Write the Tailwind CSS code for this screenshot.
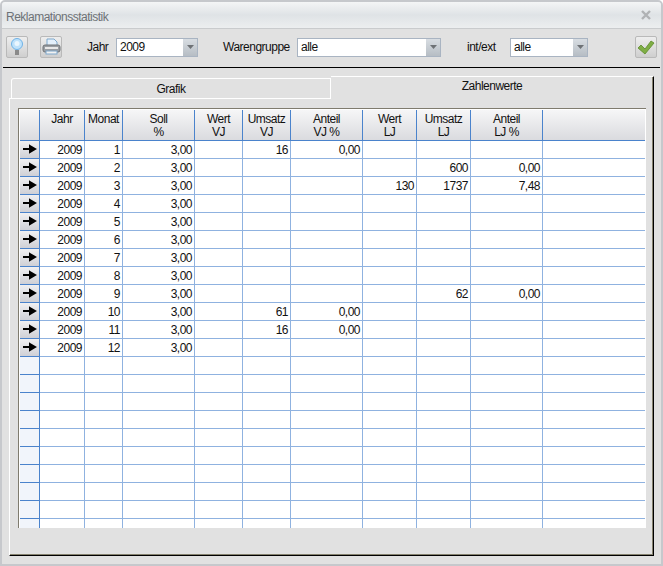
<!DOCTYPE html>
<html lang="de">
  <head>
    <meta charset="UTF-8" />
    <title>Reklamationsstatistik</title>
    <script src="https://cdn.jsdelivr.net/npm/@tailwindcss/browser@4"></script>
  </head>
  <body class="w-[663px] h-[566px] overflow-hidden bg-white font-['Liberation_Sans',sans-serif] text-[12px] tracking-[-0.5px] text-[#111]">
    <div class="w-[663px] h-[566px] flex flex-col bg-[#e1e1e1] border-2 border-[#c6c8cc] rounded-t-[5px] overflow-hidden">
      <!-- title bar -->
      <div class="h-[27px] shrink-0 flex items-center justify-between pl-[4px] pr-[10px] bg-gradient-to-b from-[#f4f5f6] via-[#dfe3e6] to-[#eceeef] border-b border-[#c9cbcd] text-[#6d7276]">
        <span class="pt-[4px]">Reklamationsstatistik</span>
        <svg class="w-[10px] h-[10px]" viewBox="0 0 10 10"><path d="M1 1l8 8M9 1l-8 8" stroke="#b0b2b4" stroke-width="2.4" fill="none" /></svg>
      </div>

      <!-- toolbar -->
      <div class="h-[39px] shrink-0 flex items-center pl-[3px] pb-[2px] border-b border-black mx-px whitespace-nowrap">
        <button class="w-[22px] h-[22px] flex items-center justify-center bg-gradient-to-b from-[#eeeeee] to-[#cfcfcf] border border-[#b9b9b9] rounded-[2px]">
          <svg class="w-[14px] h-[18px]" viewBox="0 0 14 18">
            <circle cx="7" cy="6" r="5.5" fill="#bfe2fb" stroke="#6fb2e6" />
            <circle cx="7" cy="5.5" r="2.5" fill="#eaf6fe" />
            <path d="M5 12h4v5H5z" fill="#8a8a8a" />
          </svg>
        </button>
        <button class="w-[22px] h-[22px] ml-[12px] flex items-center justify-center bg-gradient-to-b from-[#eeeeee] to-[#cfcfcf] border border-[#b9b9b9] rounded-[2px]">
          <svg class="w-[19px] h-[18px]" viewBox="0 0 19 18">
            <path d="M5 1h7l3 3v5H5z" fill="#e4f0fb" stroke="#7fa8cc" />
            <rect x="1" y="7" width="17" height="7" rx="2" fill="#9a9ea3" stroke="#6f7377" />
            <rect x="3" y="9" width="13" height="2" fill="#e8e8e8" />
            <rect x="4" y="13" width="11" height="3" fill="#f2f2f2" stroke="#7fa8cc" />
          </svg>
        </button>
        <span class="ml-[25px] w-[20px]">Jahr</span>
        <div class="ml-[9px] w-[82px] h-[19px] flex bg-white border border-[#a9b4c2]">
          <span class="flex-1 pl-[3px] leading-[17px]">2009</span>
          <span class="w-[14px] flex items-center justify-center bg-gradient-to-b from-[#d8dde2] to-[#b6bdc4]">
            <svg class="w-[7px] h-[4px]" viewBox="0 0 7 4"><path d="M0 0h7L3.5 4z" fill="#6e7276" /></svg>
          </span>
        </div>
        <span class="ml-[25px] w-[65px]">Warengruppe</span>
        <div class="ml-[9px] w-[144px] h-[19px] flex bg-white border border-[#a9b4c2]">
          <span class="flex-1 pl-[3px] leading-[17px]">alle</span>
          <span class="w-[14px] flex items-center justify-center bg-gradient-to-b from-[#d8dde2] to-[#b6bdc4]">
            <svg class="w-[7px] h-[4px]" viewBox="0 0 7 4"><path d="M0 0h7L3.5 4z" fill="#6e7276" /></svg>
          </span>
        </div>
        <span class="ml-[26px] w-[30px]">int/ext</span>
        <div class="ml-[13px] w-[78px] h-[19px] flex bg-white border border-[#a9b4c2]">
          <span class="flex-1 pl-[3px] leading-[17px]">alle</span>
          <span class="w-[14px] flex items-center justify-center bg-gradient-to-b from-[#d8dde2] to-[#b6bdc4]">
            <svg class="w-[7px] h-[4px]" viewBox="0 0 7 4"><path d="M0 0h7L3.5 4z" fill="#6e7276" /></svg>
          </span>
        </div>
        <button class="ml-[47px] w-[22px] h-[22px] flex items-center justify-center bg-gradient-to-b from-[#eeeeee] to-[#cfcfcf] border border-[#b9b9b9] rounded-[2px]">
          <svg class="w-[18px] h-[15px]" viewBox="0 0 18 15"><path d="M1 8l3-3 4 4 6-8 3 2-9 11z" fill="#7fae45" stroke="#5d8a2c" stroke-width=".8" /></svg>
        </button>
      </div>

      <!-- tabs -->
      <div class="h-[31px] w-[645px] ml-[7px] shrink-0 flex items-end">
        <div class="w-[322px] h-[21px] pl-[2px] border-b border-white">
          <div class="h-full flex items-center justify-center border-t border-l border-r border-white rounded-tl-[3px]">Grafik</div>
        </div>
        <div class="flex-1 h-[23px] pb-[4px] flex items-center justify-center border-t border-t-white border-r border-r-black shadow-[inset_-1px_0_0_#85826f]">Zahlenwerte</div>
      </div>

      <!-- tab page with the grid -->
      <div class="w-[645px] h-[457px] ml-[7px] pt-[9px] pl-[8px] border-l border-l-white border-r border-r-black border-b border-b-black shadow-[inset_-1px_-1px_0_#85826f]">
        <div class="w-[628px] h-[420px] overflow-hidden bg-white pl-px pt-px pr-px pb-px border-t border-l border-[#7f7b6e]">
          <table class="table-fixed border-separate border-spacing-0 w-[625px] text-right">
            <colgroup>
              <col class="w-[20px]" /><col class="w-[45px]" /><col class="w-[38px]" /><col class="w-[72px]" /><col class="w-[48px]" /><col class="w-[48px]" /><col class="w-[72px]" /><col class="w-[54px]" /><col class="w-[54px]" /><col class="w-[72px]" /><col />
            </colgroup>
            <thead>
              <tr class="h-[31px] bg-gradient-to-b from-[#f6f6f7] to-[#d9dade] text-center align-top leading-[13px] [&>th]:font-normal [&>th]:pt-[3px] [&>th]:border-r [&>th]:border-r-[#4a83cc] [&>th]:border-b [&>th]:border-b-[#4a83cc]">
                <th></th><th>Jahr</th><th>Monat</th><th>Soll<br />%</th><th>Wert<br />VJ</th><th>Umsatz<br />VJ</th><th>Anteil<br />VJ %</th><th>Wert<br />LJ</th><th>Umsatz<br />LJ</th><th>Anteil<br />LJ %</th><th class="!border-r-0"></th>
              </tr>
            </thead>
            <tbody class="[&_td]:border-r [&_td]:border-b [&_td]:border-[#8fb2e0] [&_td]:p-0 [&_td]:pr-[2px] [&_td]:pt-px [&_td]:h-[18px] [&_td]:leading-[16px] [&_td:first-child]:border-[#4a83cc] [&_td:first-child]:pr-0 [&_td:first-child]:pt-0 [&_td:last-child]:border-r-0">
              <tr><td class="bg-gradient-to-b from-[#f0f0f2] to-[#cfd0d6]"><svg class="w-[19px] h-[17px]" viewBox="0 0 19 17"><path d="M3 8h9M10 5l5 3-5 3z" stroke="#000" stroke-width="2" fill="#000" /></svg></td><td>2009</td><td>1</td><td>3,00</td><td></td><td>16</td><td>0,00</td><td></td><td></td><td></td><td></td></tr>
              <tr><td class="bg-gradient-to-b from-[#f0f0f2] to-[#cfd0d6]"><svg class="w-[19px] h-[17px]" viewBox="0 0 19 17"><path d="M3 8h9M10 5l5 3-5 3z" stroke="#000" stroke-width="2" fill="#000" /></svg></td><td>2009</td><td>2</td><td>3,00</td><td></td><td></td><td></td><td></td><td>600</td><td>0,00</td><td></td></tr>
              <tr><td class="bg-gradient-to-b from-[#f0f0f2] to-[#cfd0d6]"><svg class="w-[19px] h-[17px]" viewBox="0 0 19 17"><path d="M3 8h9M10 5l5 3-5 3z" stroke="#000" stroke-width="2" fill="#000" /></svg></td><td>2009</td><td>3</td><td>3,00</td><td></td><td></td><td></td><td>130</td><td>1737</td><td>7,48</td><td></td></tr>
              <tr><td class="bg-gradient-to-b from-[#f0f0f2] to-[#cfd0d6]"><svg class="w-[19px] h-[17px]" viewBox="0 0 19 17"><path d="M3 8h9M10 5l5 3-5 3z" stroke="#000" stroke-width="2" fill="#000" /></svg></td><td>2009</td><td>4</td><td>3,00</td><td></td><td></td><td></td><td></td><td></td><td></td><td></td></tr>
              <tr><td class="bg-gradient-to-b from-[#f0f0f2] to-[#cfd0d6]"><svg class="w-[19px] h-[17px]" viewBox="0 0 19 17"><path d="M3 8h9M10 5l5 3-5 3z" stroke="#000" stroke-width="2" fill="#000" /></svg></td><td>2009</td><td>5</td><td>3,00</td><td></td><td></td><td></td><td></td><td></td><td></td><td></td></tr>
              <tr><td class="bg-gradient-to-b from-[#f0f0f2] to-[#cfd0d6]"><svg class="w-[19px] h-[17px]" viewBox="0 0 19 17"><path d="M3 8h9M10 5l5 3-5 3z" stroke="#000" stroke-width="2" fill="#000" /></svg></td><td>2009</td><td>6</td><td>3,00</td><td></td><td></td><td></td><td></td><td></td><td></td><td></td></tr>
              <tr><td class="bg-gradient-to-b from-[#f0f0f2] to-[#cfd0d6]"><svg class="w-[19px] h-[17px]" viewBox="0 0 19 17"><path d="M3 8h9M10 5l5 3-5 3z" stroke="#000" stroke-width="2" fill="#000" /></svg></td><td>2009</td><td>7</td><td>3,00</td><td></td><td></td><td></td><td></td><td></td><td></td><td></td></tr>
              <tr><td class="bg-gradient-to-b from-[#f0f0f2] to-[#cfd0d6]"><svg class="w-[19px] h-[17px]" viewBox="0 0 19 17"><path d="M3 8h9M10 5l5 3-5 3z" stroke="#000" stroke-width="2" fill="#000" /></svg></td><td>2009</td><td>8</td><td>3,00</td><td></td><td></td><td></td><td></td><td></td><td></td><td></td></tr>
              <tr><td class="bg-gradient-to-b from-[#f0f0f2] to-[#cfd0d6]"><svg class="w-[19px] h-[17px]" viewBox="0 0 19 17"><path d="M3 8h9M10 5l5 3-5 3z" stroke="#000" stroke-width="2" fill="#000" /></svg></td><td>2009</td><td>9</td><td>3,00</td><td></td><td></td><td></td><td></td><td>62</td><td>0,00</td><td></td></tr>
              <tr><td class="bg-gradient-to-b from-[#f0f0f2] to-[#cfd0d6]"><svg class="w-[19px] h-[17px]" viewBox="0 0 19 17"><path d="M3 8h9M10 5l5 3-5 3z" stroke="#000" stroke-width="2" fill="#000" /></svg></td><td>2009</td><td>10</td><td>3,00</td><td></td><td>61</td><td>0,00</td><td></td><td></td><td></td><td></td></tr>
              <tr><td class="bg-gradient-to-b from-[#f0f0f2] to-[#cfd0d6]"><svg class="w-[19px] h-[17px]" viewBox="0 0 19 17"><path d="M3 8h9M10 5l5 3-5 3z" stroke="#000" stroke-width="2" fill="#000" /></svg></td><td>2009</td><td>11</td><td>3,00</td><td></td><td>16</td><td>0,00</td><td></td><td></td><td></td><td></td></tr>
              <tr><td class="bg-gradient-to-b from-[#f0f0f2] to-[#cfd0d6]"><svg class="w-[19px] h-[17px]" viewBox="0 0 19 17"><path d="M3 8h9M10 5l5 3-5 3z" stroke="#000" stroke-width="2" fill="#000" /></svg></td><td>2009</td><td>12</td><td>3,00</td><td></td><td></td><td></td><td></td><td></td><td></td><td></td></tr>
              <tr><td class="bg-[#f1f5fb]"></td><td></td><td></td><td></td><td></td><td></td><td></td><td></td><td></td><td></td><td></td></tr>
              <tr><td class="bg-[#f1f5fb]"></td><td></td><td></td><td></td><td></td><td></td><td></td><td></td><td></td><td></td><td></td></tr>
              <tr><td class="bg-[#f1f5fb]"></td><td></td><td></td><td></td><td></td><td></td><td></td><td></td><td></td><td></td><td></td></tr>
              <tr><td class="bg-[#f1f5fb]"></td><td></td><td></td><td></td><td></td><td></td><td></td><td></td><td></td><td></td><td></td></tr>
              <tr><td class="bg-[#f1f5fb]"></td><td></td><td></td><td></td><td></td><td></td><td></td><td></td><td></td><td></td><td></td></tr>
              <tr><td class="bg-[#f1f5fb]"></td><td></td><td></td><td></td><td></td><td></td><td></td><td></td><td></td><td></td><td></td></tr>
              <tr><td class="bg-[#f1f5fb]"></td><td></td><td></td><td></td><td></td><td></td><td></td><td></td><td></td><td></td><td></td></tr>
              <tr><td class="bg-[#f1f5fb]"></td><td></td><td></td><td></td><td></td><td></td><td></td><td></td><td></td><td></td><td></td></tr>
              <tr><td class="bg-[#f1f5fb]"></td><td></td><td></td><td></td><td></td><td></td><td></td><td></td><td></td><td></td><td></td></tr>
              <tr><td class="bg-[#f1f5fb]"></td><td></td><td></td><td></td><td></td><td></td><td></td><td></td><td></td><td></td><td></td></tr>
            </tbody>
          </table>
        </div>
      </div>
    </div>
  </body>
</html>
